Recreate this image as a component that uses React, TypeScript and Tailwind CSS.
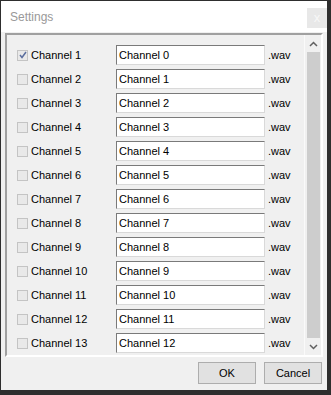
import React from "react";

const rows = Array.from({ length: 13 }, (_, i) => ({
  label: `Channel ${i + 1}`,
  value: `Channel ${i}`,
  checked: i === 0,
}));

function CheckBox({ checked }: { checked: boolean }) {
  return (
    <div className="w-[11px] h-[11px] border border-[#c4c4c4] bg-[#e9e9e9] flex items-center justify-center shrink-0">
      {checked && (
        <svg width="8" height="8" viewBox="0 0 8 8">
          <path d="M1 4 L3 6.5 L7 1" fill="none" stroke="#5b6e9e" strokeWidth="1.5" />
        </svg>
      )}
    </div>
  );
}

function Chevron({ down }: { down?: boolean }) {
  return (
    <svg width="9" height="6" viewBox="0 0 9 6">
      <path
        d={down ? "M1 1 L4.5 4.5 L8 1" : "M1 5 L4.5 1.5 L8 5"}
        fill="none"
        stroke="#606060"
        strokeWidth="1.5"
      />
    </svg>
  );
}

export default function App() {
  return (
    <div
      className="w-[331px] h-[395px] bg-[#2e2e2e] pl-[1px] pt-[1px] pr-[4px] pb-[5px] flex"
      style={{ fontFamily: '"Liberation Sans", Arial, sans-serif' }}
    >
      <div className="flex-1 flex flex-col bg-[#f0f0f0]">
        <div className="h-[31px] bg-white flex items-start justify-between shrink-0">
          <span className="text-[12px] text-[#999999] pl-[9px] pt-[9px] leading-[14px]">Settings</span>
          <div className="mt-[7px] w-[20px] h-[20px] bg-[#e8e8e8] text-[#f7f7f7] text-[13px] leading-[18px] flex items-center justify-center">
            x
          </div>
        </div>
        <div className="flex-1 flex flex-col px-[4px] pt-[1px]">
          <div className="h-[324px] border-2 border-t-[#a0a0a0] border-l-[#a0a0a0] border-r-white border-b-white flex overflow-hidden shrink-0">
            <div className="flex-1 overflow-hidden pt-[10px] pl-[10px] flex flex-col gap-[4px]">
              {rows.map((r) => (
                <div key={r.label} className="flex items-center h-[20px] shrink-0 text-[11px] text-black">
                  <CheckBox checked={r.checked} />
                  <span className="w-[88px] pl-[3px] leading-[13px]">{r.label}</span>
                  <div className="w-[149px] h-[20px] bg-white border border-t-[#7a7a7a] border-l-[#7a7a7a] border-r-[#d9d9d9] border-b-[#d9d9d9] pl-[2px] flex items-center leading-[13px]">
                    {r.value}
                  </div>
                  <span className="pl-[3px] leading-[13px]">.wav</span>
                </div>
              ))}
            </div>
            <div className="w-[17px] bg-[#f0f0f0] border-l border-l-[#fafafa] flex flex-col items-center shrink-0">
              <div className="h-[17px] flex items-center justify-center shrink-0">
                <Chevron />
              </div>
              <div className="flex-1 w-[13px] bg-[#cdcdcd]" />
              <div className="h-[17px] flex items-center justify-center shrink-0">
                <Chevron down />
              </div>
            </div>
          </div>
          <div className="flex justify-end gap-[8px] pt-[5px] pr-[1px]">
            <button className="w-[58px] h-[22px] bg-[#e1e1e1] border border-[#adadad] text-[11px] text-black">
              OK
            </button>
            <button className="w-[58px] h-[22px] bg-[#e1e1e1] border border-[#adadad] text-[11px] text-black">
              Cancel
            </button>
          </div>
        </div>
      </div>
    </div>
  );
}
